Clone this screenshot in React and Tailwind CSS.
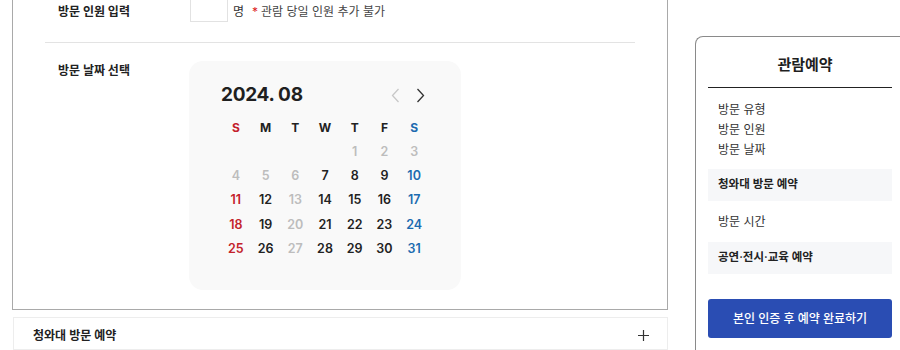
import React from 'react';

const FONT = { fontFamily: 'Inter, "Noto Sans CJK KR", "Noto Sans", sans-serif' };

const weekdays = [
  { d: 'S', c: 'text-[#c4222b]' },
  { d: 'M', c: 'text-[#222]' },
  { d: 'T', c: 'text-[#222]' },
  { d: 'W', c: 'text-[#222]' },
  { d: 'T', c: 'text-[#222]' },
  { d: 'F', c: 'text-[#222]' },
  { d: 'S', c: 'text-[#1c6bb0]' },
];

// null = empty cell, 'off' = disabled day
const weeks = [
  [null, null, null, null, [1, 'off'], [2, 'off'], [3, 'off']],
  [[4, 'off'], [5, 'off'], [6, 'off'], [7], [8], [9], [10]],
  [[11], [12], [13, 'off'], [14], [15], [16], [17]],
  [[18], [19], [20, 'off'], [21], [22], [23], [24]],
  [[25], [26], [27, 'off'], [28], [29], [30], [31]],
];

const dayColor = (cell, col) => {
  if (cell[1] === 'off') return 'text-[#bdbdbd]';
  if (col === 0) return 'text-[#c4222b]';
  if (col === 6) return 'text-[#1c6bb0]';
  return 'text-[#222]';
};

const Calendar = () => (
  <div className="w-[272px] h-[229px] bg-[#f9f9f9] rounded-[14px] pl-[32px] pr-[32px] pt-[22px]">
    <div className="flex items-center justify-between h-[24px]">
      <span className="text-[19px] font-bold text-[#1f1f1f] tracking-[-0.3px]">2024. 08</span>
      <div className="flex items-center gap-[16px] pr-[4px]">
        <svg width="9" height="15" viewBox="0 0 9 15" fill="none">
          <path d="M7.5 1L1.5 7.5L7.5 14" stroke="#c8c8c8" strokeWidth="1.3" />
        </svg>
        <svg width="9" height="15" viewBox="0 0 9 15" fill="none">
          <path d="M1.5 1L7.5 7.5L1.5 14" stroke="#333" strokeWidth="1.3" />
        </svg>
      </div>
    </div>
    <div className="grid grid-cols-7 w-[208px] mt-[9px]">
      {weekdays.map((w, i) => (
        <div key={i} className={`h-[24px] flex items-center justify-center text-[12px] font-bold ${w.c}`}>
          {w.d}
        </div>
      ))}
      {weeks.flat().map((cell, i) => (
        <div
          key={`d${i}`}
          className={`h-[24.3px] flex items-center justify-center text-[12.5px] font-semibold ${cell ? dayColor(cell, i % 7) : ''}`}
        >
          {cell ? cell[0] : ''}
        </div>
      ))}
    </div>
  </div>
);

const App = () => {
  return (
    <div className="w-[900px] h-[350px] overflow-hidden bg-white flex" style={FONT}>
      {/* left column */}
      <div className="ml-[12px] w-[656px] shrink-0 flex flex-col">
        <div className="border border-t-0 border-[#a9a9a9] px-[32px] pb-[19px]">
          <div className="flex h-[22px]">
            <div className="w-[145px] pl-[13px] pt-[3px] text-[12px] font-bold text-[#222]">방문 인원 입력</div>
            <div className="w-[38px] h-[34px] -mt-[12px] border border-[#e2e2e2] bg-white" />
            <div className="pl-[5px] pt-[3px] text-[12px] text-[#333] flex">
              <span>명</span>
              <span className="ml-[8px] text-[#d22]">*</span>
              <span className="ml-[3px] text-[#444]">관람 당일 인원 추가 불가</span>
            </div>
          </div>
          <div className="mt-[20px] border-t border-[#e3e3e3]" />
          <div className="flex pt-[18px]">
            <div className="w-[144px] pl-[13px] pt-[1px] text-[12px] font-bold text-[#222]">방문 날짜 선택</div>
            <Calendar />
          </div>
        </div>
        <div className="mt-[7px] ml-[1px] border border-[#ededed] h-[40px] flex items-center justify-between pl-[19px] pr-[18px] pt-[4px]">
          <span className="text-[12px] font-semibold text-[#222]">청와대 방문 예약</span>
          <svg width="11" height="11" viewBox="0 0 11 11" fill="none">
            <path d="M5.5 0V11M0 5.5H11" stroke="#333" strokeWidth="1.2" />
          </svg>
        </div>
      </div>

      {/* right panel */}
      <div className="ml-[27px] mt-[36px] w-[209px] h-[330px] shrink-0 border border-r-0 border-[#8a8a8a] rounded-tl-[8px] px-[12px]">
        <div className="h-[51px] flex items-center justify-center pt-[7px] pl-[10px] border-b-[1.5px] border-[#222] text-[15px] font-bold text-[#1f1f1f]">
          관람예약
        </div>
        <div className="pt-[12px] pl-[10px] text-[12px] text-[#333] leading-[20px]">
          <div>방문 유형</div>
          <div>방문 인원</div>
          <div>방문 날짜</div>
        </div>
        <div className="mt-[9px] h-[32px] bg-[#f6f7f9] flex items-center pl-[10px] text-[11.5px] font-semibold text-[#222]">
          청와대 방문 예약
        </div>
        <div className="h-[41px] flex items-center pl-[10px] text-[12px] text-[#333]">방문 시간</div>
        <div className="h-[32px] bg-[#f6f7f9] flex items-center pl-[10px] text-[11.5px] font-semibold text-[#222]">
          공연·전시·교육 예약
        </div>
        <button className="mt-[25px] w-full h-[39px] rounded-[3px] bg-[#2a4db3] text-white text-[12px] font-medium flex items-center justify-center">
          본인 인증 후 예약 완료하기
        </button>
      </div>
    </div>
  );
};

export default App;
